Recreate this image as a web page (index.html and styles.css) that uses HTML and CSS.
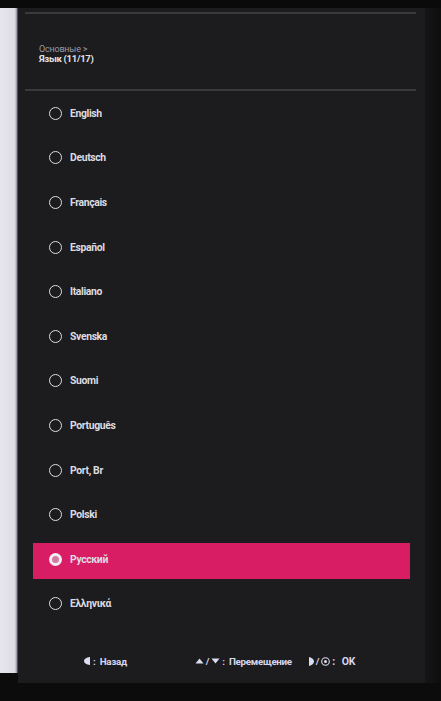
FILE: index.html
```html
<!DOCTYPE html>
<html lang="ru">
<head>
<meta charset="utf-8">
<title>Язык</title>
<link rel="stylesheet" href="styles.css">
</head>
<body>
<div class="screen">
  <div class="topband"></div>
  <div class="main">
    <div class="strip"></div>
    <div class="panel">
      <div class="rule rule-top"></div>
      <div class="crumbs">
        <div class="crumb-parent">Основные &gt;</div>
        <div class="crumb-title">Язык (11/17)</div>
      </div>
      <div class="rule rule-mid"></div>
      <ul class="list">
        <li class="item"><div class="row"><span class="radio"></span><span class="label">English</span></div></li>
        <li class="item"><div class="row"><span class="radio"></span><span class="label">Deutsch</span></div></li>
        <li class="item"><div class="row"><span class="radio"></span><span class="label">Français</span></div></li>
        <li class="item"><div class="row"><span class="radio"></span><span class="label">Español</span></div></li>
        <li class="item"><div class="row"><span class="radio"></span><span class="label">Italiano</span></div></li>
        <li class="item"><div class="row"><span class="radio"></span><span class="label">Svenska</span></div></li>
        <li class="item"><div class="row"><span class="radio"></span><span class="label">Suomi</span></div></li>
        <li class="item"><div class="row"><span class="radio"></span><span class="label">Português</span></div></li>
        <li class="item"><div class="row"><span class="radio"></span><span class="label">Port, Br</span></div></li>
        <li class="item"><div class="row"><span class="radio"></span><span class="label">Polski</span></div></li>
        <li class="item"><div class="row row-active"><span class="radio radio-on"></span><span class="label">Русский</span></div></li>
        <li class="item"><div class="row"><span class="radio"></span><span class="label">Ελληνικά</span></div></li>
      </ul>
      <div class="footer">
        <span class="hint hint-back">
          <svg class="ico" width="7" height="8" viewBox="0 0 7 8"><path d="M6 0 C2 0.5 0 2 0 4 C0 6 2 7.5 6 8 Z" fill="#dcdcf0"/></svg>
          <span>:&nbsp; Назад</span>
        </span>
        <span class="hint hint-move">
          <svg class="ico" width="9" height="6" viewBox="0 0 9 6"><path d="M4.5 0.5 L8.5 5.5 L0.5 5.5 Z" fill="#dcdcf0"/></svg>
          <span>/</span>
          <svg class="ico" width="9" height="6" viewBox="0 0 9 6"><path d="M0.5 0.5 L8.5 0.5 L4.5 5.5 Z" fill="#dcdcf0"/></svg>
          <span>:&nbsp; Перемещение</span>
        </span>
        <span class="hint hint-ok">
          <svg class="ico" width="6" height="9" viewBox="0 0 6 9"><path d="M1 0 C4 0.5 6 2.5 6 4.5 C6 6.5 4 8.5 1 9 Z" fill="#dcdcf0"/></svg>
          <span>/</span>
          <svg class="ico" width="9" height="9" viewBox="0 0 9 9"><circle cx="4.5" cy="4.5" r="3.8" fill="none" stroke="#dcdcf0" stroke-width="1.1"/><circle cx="4.5" cy="4.5" r="1.5" fill="#dcdcf0"/></svg>
          <span class="ok">:&nbsp;&nbsp; OK</span>
        </span>
      </div>
    </div>
    <div class="edge"></div>
  </div>
</div>
</body>
</html>
```

FILE: styles.css
```css
* { box-sizing: border-box; }
html, body {
  margin: 0;
  padding: 0;
  background: #0b0b0c;
  width: 441px;
  height: 701px;
  overflow: hidden;
  font-family: Roboto, "Liberation Sans", "Noto Sans", sans-serif;
}
.screen {
  display: flex;
  flex-direction: column;
  width: 441px;
  height: 701px;
  background: #0c0c0d;
}
.topband {
  height: 8px;
  background: #0a0a0b;
}
.main {
  display: flex;
  height: 675px;
}
.strip {
  width: 18px;
  height: 665px;
  background: linear-gradient(90deg, #e7e6ec 0%, #dddce3 80%, #b7b4c6 90%, #2b2445 100%);
}
.panel {
  width: 407px;
  height: 675px;
  background: #1c1b1d;
  display: flex;
  flex-direction: column;
}
.edge {
  flex: 1;
  background: linear-gradient(90deg, #151516 0%, #0e0e0f 100%);
}
.rule {
  height: 2px;
  background: #3a393c;
  margin-left: 7px;
  margin-right: 9px;
}
.rule-top {
  margin-top: 4px;
}
.crumbs {
  height: 75px;
  padding-top: 30px;
  padding-left: 21px;
  line-height: 10px;
}
.crumb-parent {
  font-size: 9px;
  color: #9b9aa1;
  letter-spacing: -0.2px;
}
.crumb-title {
  font-size: 9.5px;
  font-weight: 700;
  color: #e2e2e6;
  letter-spacing: -0.3px;
}
.list {
  list-style: none;
  margin: 0;
  padding: 0;
}
.item {
  height: 44.6px;
  display: flex;
  align-items: center;
}
.row {
  display: flex;
  align-items: center;
  gap: 8px;
  width: 377px;
  height: 33px;
  margin-left: 15px;
  padding-left: 16px;
}
.row-active {
  background: #d91d65;
  height: 36px;
  margin-top: 4px;
  padding-bottom: 4px;
}
.radio {
  width: 13px;
  height: 13px;
  border-radius: 50%;
  border: 1.8px solid #dedde2;
  flex: none;
}
.radio-on {
  border: 3.2px solid #f1eef2;
  background: #d27aa0;
}
.label {
  font-size: 10.4px;
  font-weight: 700;
  color: #dcdce0;
  letter-spacing: -0.35px;
}
.footer {
  margin-top: 25px;
  height: 20px;
  display: flex;
  align-items: center;
  font-size: 9.8px;
  font-weight: 700;
  color: #d6d6ee;
  letter-spacing: -0.3px;
}
.hint {
  display: flex;
  align-items: center;
  gap: 2px;
}
.hint-back { margin-left: 66px; }
.hint-move { margin-left: 68px; }
.hint-ok { margin-left: 16px; }
.ok { font-size: 10.5px; }
.ico { flex: none; }
```
